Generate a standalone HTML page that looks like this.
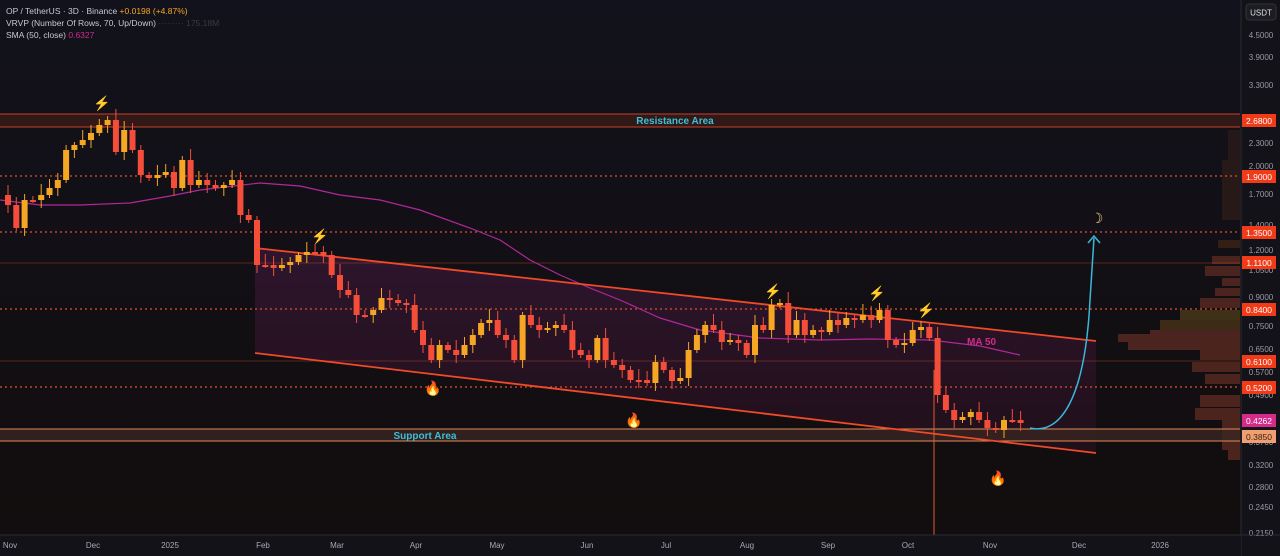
<!DOCTYPE html>
<html><head><meta charset="utf-8"><style>
html,body{margin:0;padding:0;background:#100f15;overflow:hidden}
svg{display:block;font-family:"Liberation Sans",sans-serif}
</style></head><body>
<svg id="s" width="1280" height="556" xmlns="http://www.w3.org/2000/svg">
<defs>
<linearGradient id="bg" x1="0" y1="0" x2="0" y2="1"><stop offset="0" stop-color="#12121c"/><stop offset="1" stop-color="#120d0d"/></linearGradient>
<linearGradient id="ch" x1="0" y1="0" x2="0" y2="1"><stop offset="0" stop-color="#3a1838" stop-opacity=".7"/><stop offset="1" stop-color="#2a1020" stop-opacity=".6"/></linearGradient>
</defs>
<rect width="1280" height="556" fill="url(#bg)"/>
<!-- volume profile -->
<g fill="#5a2a22" opacity=".8">
<rect x="1228" y="130" width="12" height="30" fill="#2c1a18"/>
<rect x="1222" y="160" width="18" height="60" fill="#2c1c18"/>
<rect x="1218" y="240" width="22" height="8" fill="#3a2418"/>
<rect x="1212" y="256" width="28" height="8"/>
<rect x="1205" y="266" width="35" height="10"/>
<rect x="1222" y="278" width="18" height="8"/>
<rect x="1215" y="288" width="25" height="8"/>
<rect x="1200" y="298" width="40" height="10"/>
<rect x="1180" y="310" width="60" height="10" fill="#4a3a18"/>
<rect x="1160" y="320" width="80" height="10" fill="#4a3218"/>
<rect x="1150" y="330" width="90" height="8" fill="#5a2a22"/>
<rect x="1118" y="334" width="122" height="8" fill="#5a2a22"/>
<rect x="1128" y="342" width="112" height="8"/>
<rect x="1200" y="350" width="40" height="10"/>
<rect x="1192" y="362" width="48" height="10"/>
<rect x="1205" y="374" width="35" height="10"/>
<rect x="1200" y="395" width="40" height="12"/>
<rect x="1195" y="408" width="45" height="12"/>
<rect x="1222" y="420" width="18" height="30"/>
<rect x="1228" y="450" width="12" height="10"/>
</g>
<!-- channel -->
<polygon points="255,248 1096,341 1096,453 255,353" fill="url(#ch)"/>
<!-- horizontal levels -->
<g stroke="#e0502a" stroke-width="1.2">
<line x1="0" y1="176" x2="1240" y2="176" stroke-dasharray="2,3"/>
<line x1="0" y1="232" x2="1240" y2="232" stroke-dasharray="2,3"/>
<line x1="0" y1="309" x2="1240" y2="309" stroke-dasharray="2,3"/>
<line x1="0" y1="387" x2="1240" y2="387" stroke-dasharray="2,3"/>
<line x1="0" y1="263" x2="1240" y2="263" stroke-width=".6" opacity=".7"/>
<line x1="0" y1="361" x2="1240" y2="361" stroke-width=".6" opacity=".7"/>
</g>
<rect x="0" y="114" width="1240" height="13" fill="#3a1c18" opacity=".8"/>
<line x1="0" y1="114" x2="1240" y2="114" stroke="#c8402a"/>
<line x1="0" y1="127" x2="1240" y2="127" stroke="#c8402a"/>
<rect x="0" y="429" width="1240" height="12" fill="#3a2520" opacity=".8"/>
<line x1="0" y1="429" x2="1240" y2="429" stroke="#e08a5a"/>
<line x1="0" y1="441" x2="1240" y2="441" stroke="#e08a5a"/>
<text x="675" y="124" fill="#3cc0d8" font-size="10" font-weight="bold" text-anchor="middle">Resistance Area</text>
<text x="425" y="439" fill="#3cc0d8" font-size="10" font-weight="bold" text-anchor="middle">Support Area</text>
<!-- MA -->
<polyline fill="none" stroke="#b0289a" stroke-width="1.2" points="0,200 40,205 80,205 130,203 170,196 200,190 260,183 300,186 340,195 380,200 420,210 470,228 500,240 530,260 560,275 590,288 620,300 660,318 700,330 760,338 820,340 870,339 930,340 980,346 1020,355"/>
<text x="967" y="345" fill="#d02a8a" font-size="10" font-weight="bold">MA 50</text>
<!-- channel lines -->
<line x1="255" y1="248" x2="1096" y2="341" stroke="#f04a28" stroke-width="1.8"/>
<line x1="255" y1="353" x2="1096" y2="453" stroke="#f04a28" stroke-width="1.8"/>
<line x1="934" y1="370" x2="934" y2="540" stroke="#e05a30" stroke-width="1"/>
<g id="c"></g>
<!-- arrow -->
<path d="M1030,428 C1060,435 1085,400 1090,300 L1094,238" fill="none" stroke="#3ab8d8" stroke-width="1.5"/>
<path d="M1088,243 L1094,236 L1100,243" fill="none" stroke="#3ab8d8" stroke-width="1.5"/>
<g font-size="14" text-anchor="middle">
<text x="102" y="108" fill="#f5a623">⚡</text>
<text x="320" y="241" fill="#f5a623">⚡</text>
<text x="773" y="296" fill="#f5a623">⚡</text>
<text x="877" y="298" fill="#f5a623">⚡</text>
<text x="926" y="315" fill="#f5a623">⚡</text>
<text x="433" y="393" fill="#f58a23">🔥</text>
<text x="634" y="425" fill="#f58a23">🔥</text>
<text x="998" y="483" fill="#f58a23">🔥</text>
<text x="1097" y="223" fill="#f5d080">☽</text>
</g>
<!-- legend -->
<g font-size="8.5" fill="#c8c8d0">
<text x="6" y="14">OP / TetherUS · 3D · Binance <tspan fill="#f5a623">+0.0198 (+4.87%)</tspan></text>
<text x="6" y="26">VRVP (Number Of Rows, 70, Up/Down) <tspan fill="#3a3a48">   ·········   175.18M</tspan></text>
<text x="6" y="38">SMA (50, close) <tspan fill="#d02a8a">0.6327</tspan></text>
</g>
<!-- right axis -->
<rect x="1241" y="0" width="39" height="556" fill="#131219"/>
<line x1="1241" y1="0" x2="1241" y2="556" stroke="#2a2a33"/>
<rect x="1246" y="4" width="30" height="16" rx="3" fill="#1c1c24" stroke="#333"/>
<text x="1261" y="15.5" fill="#e0e0e0" font-size="8" text-anchor="middle">USDT</text>
<g font-size="8" fill="#9a9aa4" text-anchor="middle">
<text x="1261" y="38">4.5000</text><text x="1261" y="60">3.9000</text><text x="1261" y="88">3.3000</text>
<text x="1261" y="146">2.3000</text><text x="1261" y="169">2.0000</text><text x="1261" y="197">1.7000</text>
<text x="1261" y="228">1.4000</text><text x="1261" y="253">1.2000</text><text x="1261" y="273">1.0500</text>
<text x="1261" y="300">0.9000</text><text x="1261" y="329">0.7500</text><text x="1261" y="352">0.6500</text>
<text x="1261" y="375">0.5700</text><text x="1261" y="398">0.4900</text><text x="1261" y="445">0.3700</text>
<text x="1261" y="468">0.3200</text><text x="1261" y="490">0.2800</text><text x="1261" y="510">0.2450</text><text x="1261" y="536">0.2150</text>
</g>
<g font-size="8.5" fill="#fff" text-anchor="middle">
<rect x="1242" y="114" width="34" height="13" fill="#f03a18"/><text x="1259" y="124">2.6800</text>
<rect x="1242" y="170" width="34" height="13" fill="#f03a18"/><text x="1259" y="180">1.9000</text>
<rect x="1242" y="226" width="34" height="13" fill="#f03a18"/><text x="1259" y="236">1.3500</text>
<rect x="1242" y="256" width="34" height="13" fill="#f03a18"/><text x="1259" y="266">1.1100</text>
<rect x="1242" y="303" width="34" height="13" fill="#f03a18"/><text x="1259" y="313">0.8400</text>
<rect x="1242" y="355" width="34" height="13" fill="#f03a18"/><text x="1259" y="365">0.6100</text>
<rect x="1242" y="381" width="34" height="13" fill="#f03a18"/><text x="1259" y="391">0.5200</text>
<rect x="1242" y="414" width="34" height="13" fill="#d42a8a"/><text x="1259" y="424">0.4262</text>
<rect x="1242" y="430" width="34" height="13" fill="#f0a070"/><text x="1259" y="440" fill="#3a2010">0.3850</text>
</g>
<!-- bottom axis -->
<rect x="0" y="535" width="1241" height="21" fill="#131219"/>
<line x1="0" y1="535" x2="1280" y2="535" stroke="#2a2a33"/>
<g font-size="8" fill="#a8a8b0" text-anchor="middle">
<text x="10" y="548">Nov</text><text x="93" y="548">Dec</text><text x="170" y="548">2025</text><text x="263" y="548">Feb</text>
<text x="337" y="548">Mar</text><text x="416" y="548">Apr</text><text x="497" y="548">May</text><text x="587" y="548">Jun</text>
<text x="666" y="548">Jul</text><text x="747" y="548">Aug</text><text x="828" y="548">Sep</text><text x="908" y="548">Oct</text>
<text x="990" y="548">Nov</text><text x="1079" y="548">Dec</text><text x="1160" y="548">2026</text>
</g>
</svg>
<script>
var d=[195,205,228,200,200,195,188,180,150,145,140,133,125,120,152,130,150,175,178,175,172,188,160,185,180,185,188,185,180,215,220,265,265,268,265,262,255,252,252,255,275,290,295,315,315,310,298,300,303,305,330,345,360,345,350,355,345,335,323,320,335,340,360,315,325,330,328,325,330,350,355,360,338,360,365,370,380,380,383,362,370,381,378,350,335,325,330,342,340,343,355,325,330,305,303,335,320,335,330,332,320,325,318,320,315,320,310,340,345,343,330,327,338,395,410,420,417,412,420,428,430,420,420,423];
var g=document.getElementById('c'),h='';
for(var i=1;i<d.length;i++){var x=5+(i-1)*8.3,o=d[i-1],c=d[i],t=Math.min(o,c),b=Math.max(o,c),up=c<o,col=up?'#f5a623':'#f44e3b';
var hi=t-3-((i*7)%9),lo=b+3+((i*5)%10);if(b-t<2){b=t+2}
h+='<line x1="'+(x+3)+'" y1="'+hi+'" x2="'+(x+3)+'" y2="'+lo+'" stroke="'+col+'" stroke-width="1"/><rect x="'+x+'" y="'+t+'" width="6" height="'+(b-t)+'" fill="'+col+'"/>';}
g.innerHTML=h;
</script>
</body></html>
